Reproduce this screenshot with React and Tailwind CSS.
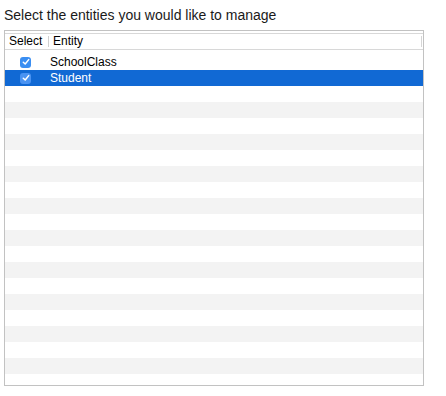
import React from 'react';

const entities = [
  { name: 'SchoolClass', checked: true, selected: false },
  { name: 'Student', checked: true, selected: true },
];

const Checkbox = ({ selected }) => (
  <span
    className={`flex h-[11px] w-[11px] items-center justify-center rounded-[3px] ${
      selected ? 'bg-[#4a93f2]' : 'bg-[#3a8ef2]'
    }`}
  >
    <svg width="8" height="8" viewBox="0 0 8 8" fill="none">
      <path d="M1.3 4.2 L3.2 6 L6.7 1.6" stroke="white" strokeWidth="1.5" strokeLinecap="round" strokeLinejoin="round" />
    </svg>
  </span>
);

const EntityRow = ({ row, index }) => {
  const bg = row.selected ? 'bg-[#1169d4] text-white' : index % 2 === 1 ? 'bg-[#f3f3f3] text-black' : 'bg-white text-black';
  return (
    <div className={`flex h-[16px] items-center ${bg}`}>
      <div className="flex w-[45px] pl-[15px]">
        {row.name && <Checkbox selected={row.selected} />}
      </div>
      <div className="text-[12px] leading-[16px]">{row.name}</div>
    </div>
  );
};

export default function App() {
  const rows = [...entities];
  while (rows.length < 21) rows.push({ name: '', checked: false, selected: false });

  return (
    <div className="h-[396px] w-[446px] bg-white font-['Liberation_Sans',Arial,sans-serif] text-black">
      <div className="px-[4px] pt-[6px] text-[14px] leading-[18px] text-[#1a1a1a]">
        Select the entities you would like to manage
      </div>

      <div className="ml-[4px] mt-[6px] flex h-[356px] w-[420px] flex-col overflow-hidden border border-[#c2c2c2] bg-white">
        <div className="pt-[2px]">
          <div className="flex h-[17px] items-center border-y border-[#d8d8d8] text-[12px] leading-[15px]">
            <div className="w-[43px] pl-[4px]">Select</div>
            <div className="h-[11px] w-px bg-[#d0d0d0]" />
            <div className="flex-1 pl-[4px]">Entity</div>
            <div className="mr-[1px] h-[11px] w-px bg-[#d6d6d6]" />
          </div>
        </div>
        <div className="mt-[4px] flex flex-col">
          {rows.map((row, i) => (
            <EntityRow key={i} row={row} index={i} />
          ))}
        </div>
      </div>
    </div>
  );
}
